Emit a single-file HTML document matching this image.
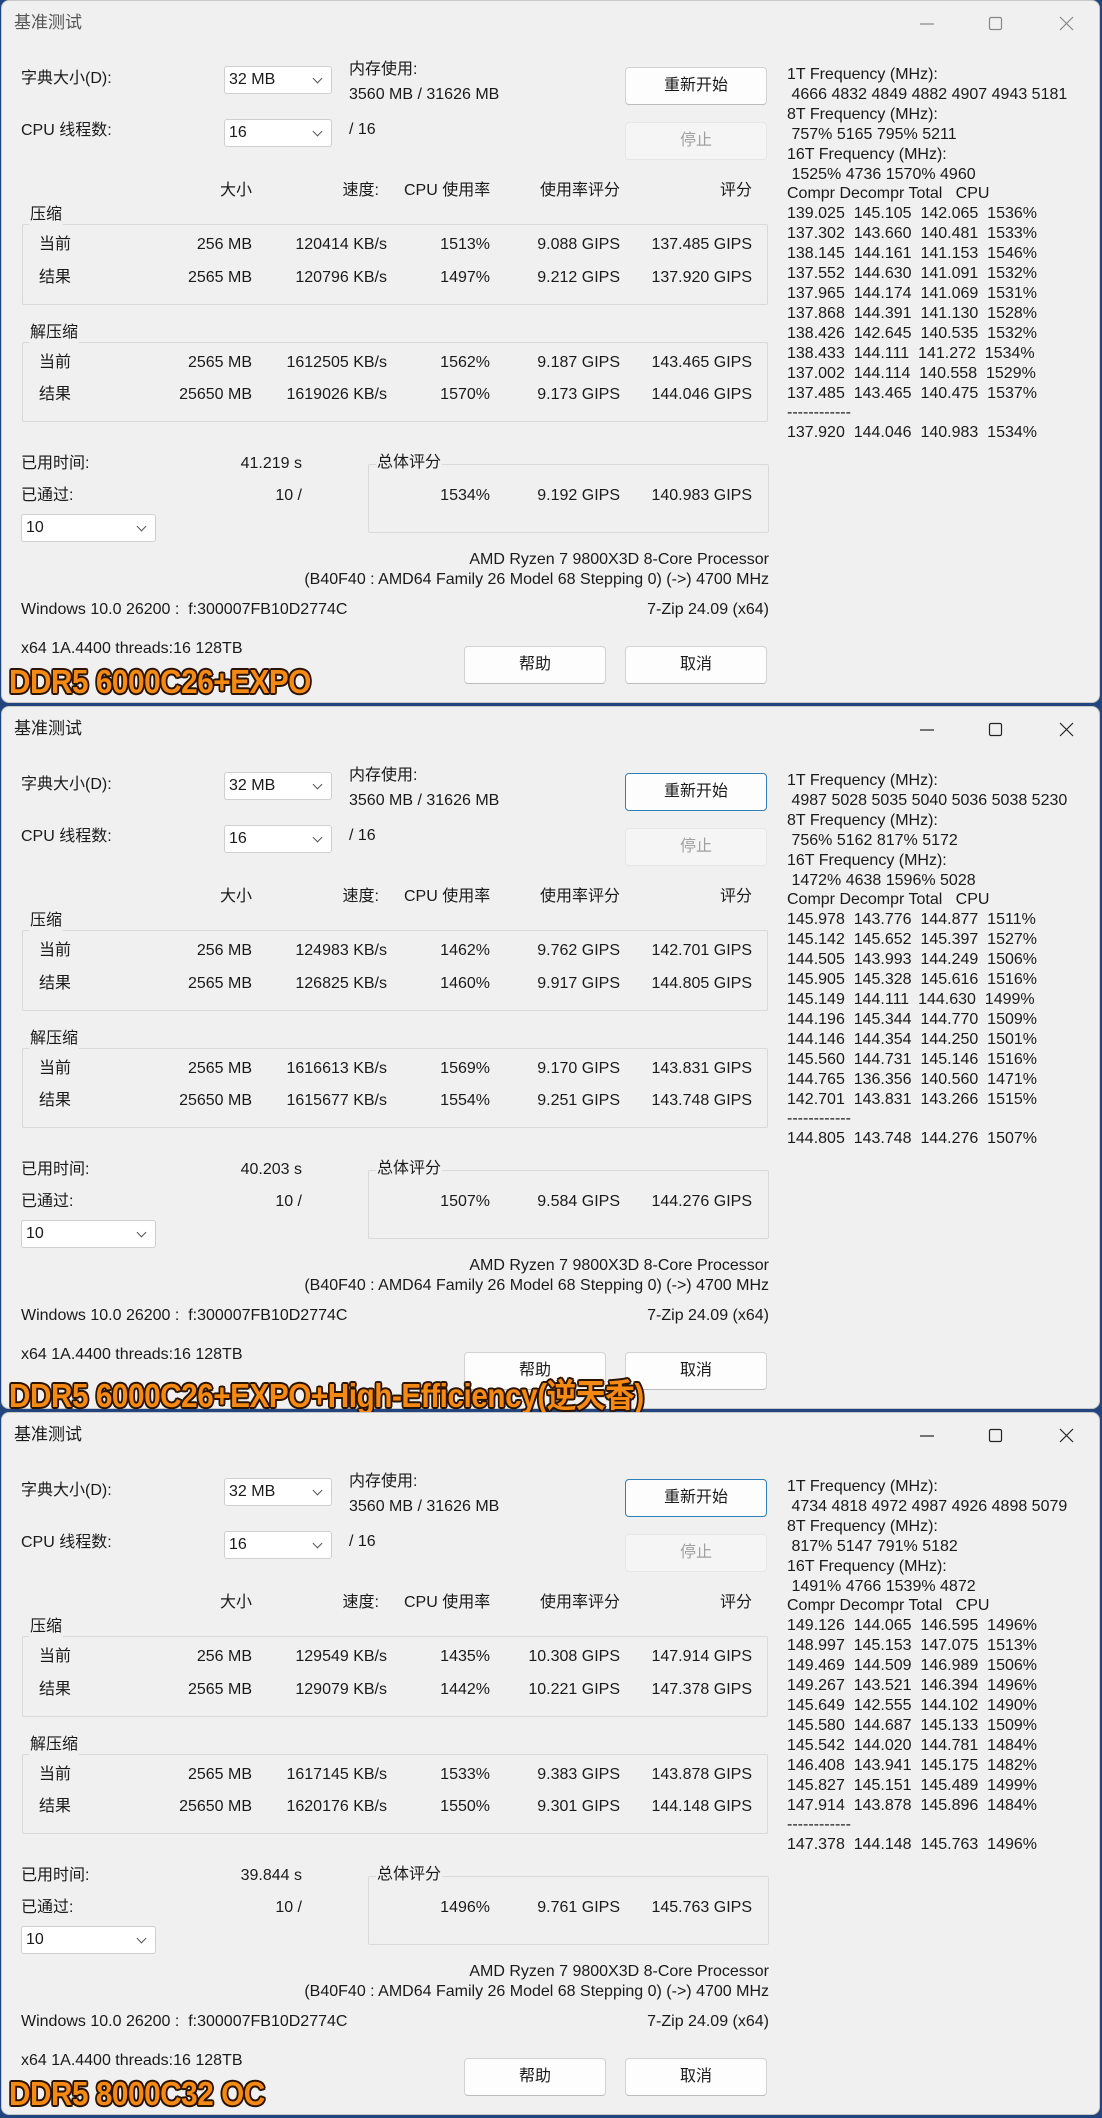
<!DOCTYPE html>
<html><head><meta charset="utf-8"><style>
*{margin:0;padding:0;box-sizing:border-box}
body{width:1102px;height:2118px;background:#23457e;position:relative;overflow:hidden;font-family:"Liberation Sans","Noto Sans CJK SC",sans-serif;font-size:16px;color:#1a1a1a}
.w{position:absolute;left:1px;width:1099px;height:703px;background:#f0f0f0;border:1px solid #c8c8c8;border-radius:8px}
.w div,.w span{position:absolute;white-space:nowrap}
.t{line-height:20px}
.r{text-align:right}
.title{left:12px;top:12px;color:#555;font-size:17px}
.cb{background:#fff;border:1px solid #cfcfcf;border-radius:3px;height:28px;padding:4px 0 0 4px}
.cb:after{content:"";position:absolute;right:10px;top:8px;width:6px;height:6px;border-right:1.3px solid #555;border-bottom:1.3px solid #555;transform:rotate(45deg)}
.btn{background:#fdfdfd;border:1px solid #d2d2d2;border-bottom-color:#bbb;border-radius:4px;text-align:center;line-height:36px}
.btn.f{border:1px solid #2f7fb8;}
.btn.d{background:#f5f5f5;border-color:#e6e6e6;color:#a0a0a0}
.gb{border:1px solid #d9d9d9;border-radius:2px}
.gl{background:#f0f0f0;padding:0 1px}
.rp{left:785px;top:64px;line-height:19.9px;font-size:16px}
.lab{left:7px;top:662px;font-weight:bold;font-size:33px;color:#f48a14;letter-spacing:-0.5px;transform:scaleX(.9);transform-origin:left top;
text-shadow:2px 0 #2a1300,-2px 0 #2a1300,0 2px #2a1300,0 -2px #2a1300,1.5px 1.5px #2a1300,-1.5px 1.5px #2a1300,1.5px -1.5px #2a1300,-1.5px -1.5px #2a1300}
.ic{position:absolute}
</style></head><body>

<!-- WINDOW 1 -->
<div class="w" style="top:0">
<div class="title t">基准测试</div>
<svg class="ic" style="left:910px;top:12px" width="170" height="22"><line x1="8" y1="11" x2="22" y2="11" stroke="#888" stroke-width="1.2"/><rect x="77.5" y="4.5" width="12" height="12" rx="1.5" fill="none" stroke="#888" stroke-width="1.2"/><path d="M148 4L161 17M161 4L148 17" stroke="#888" stroke-width="1.2"/></svg>
<div class="t" style="left:19px;top:68px">字典大小(D):</div>
<div class="cb" style="left:222px;top:65px;width:108px">32 MB</div>
<div class="t" style="left:347px;top:59px">内存使用:</div>
<div class="t" style="left:347px;top:84px">3560 MB / 31626 MB</div>
<div class="btn" style="left:623px;top:66px;width:142px;height:38px">重新开始</div>
<div class="t" style="left:19px;top:120px">CPU 线程数:</div>
<div class="cb" style="left:222px;top:118px;width:108px">16</div>
<div class="t" style="left:347px;top:119px">/ 16</div>
<div class="btn d" style="left:623px;top:121px;width:142px;height:38px">停止</div>
<div class="t r" style="left:150px;width:100px;top:180px">大小</div>
<div class="t r" style="left:275px;width:102px;top:180px">速度:</div>
<div class="t" style="left:402px;top:180px">CPU 使用率</div>
<div class="t r" style="left:500px;width:118px;top:180px">使用率评分</div>
<div class="t r" style="left:650px;width:100px;top:180px">评分</div>
<div class="gb" style="left:20px;top:223px;width:746px;height:81px"></div>
<div class="t gl" style="left:27px;top:204px">压缩</div>
<div class="t" style="left:37px;top:234px">当前</div><div class="t r" style="left:150px;width:100px;top:234px">256 MB</div><div class="t r" style="left:250px;width:135px;top:234px">120414 KB/s</div><div class="t r" style="left:400px;width:88px;top:234px">1513%</div><div class="t r" style="left:500px;width:118px;top:234px">9.088 GIPS</div><div class="t r" style="left:620px;width:130px;top:234px">137.485 GIPS</div>
<div class="t" style="left:37px;top:267px">结果</div><div class="t r" style="left:150px;width:100px;top:267px">2565 MB</div><div class="t r" style="left:250px;width:135px;top:267px">120796 KB/s</div><div class="t r" style="left:400px;width:88px;top:267px">1497%</div><div class="t r" style="left:500px;width:118px;top:267px">9.212 GIPS</div><div class="t r" style="left:620px;width:130px;top:267px">137.920 GIPS</div>
<div class="gb" style="left:20px;top:341px;width:746px;height:80px"></div>
<div class="t gl" style="left:27px;top:322px">解压缩</div>
<div class="t" style="left:37px;top:352px">当前</div><div class="t r" style="left:150px;width:100px;top:352px">2565 MB</div><div class="t r" style="left:250px;width:135px;top:352px">1612505 KB/s</div><div class="t r" style="left:400px;width:88px;top:352px">1562%</div><div class="t r" style="left:500px;width:118px;top:352px">9.187 GIPS</div><div class="t r" style="left:620px;width:130px;top:352px">143.465 GIPS</div>
<div class="t" style="left:37px;top:384px">结果</div><div class="t r" style="left:150px;width:100px;top:384px">25650 MB</div><div class="t r" style="left:250px;width:135px;top:384px">1619026 KB/s</div><div class="t r" style="left:400px;width:88px;top:384px">1570%</div><div class="t r" style="left:500px;width:118px;top:384px">9.173 GIPS</div><div class="t r" style="left:620px;width:130px;top:384px">144.046 GIPS</div>
<div class="t" style="left:19px;top:453px">已用时间:</div><div class="t r" style="left:180px;width:120px;top:453px">41.219 s</div>
<div class="t" style="left:19px;top:485px">已通过:</div><div class="t r" style="left:180px;width:120px;top:485px">10 /</div>
<div class="gb" style="left:366px;top:463px;width:401px;height:69px"></div>
<div class="t gl" style="left:374px;top:452px">总体评分</div>
<div class="t r" style="left:400px;width:88px;top:485px">1534%</div><div class="t r" style="left:500px;width:118px;top:485px">9.192 GIPS</div><div class="t r" style="left:620px;width:130px;top:485px">140.983 GIPS</div>
<div class="cb" style="left:19px;top:513px;width:135px">10</div>
<div class="t r" style="left:300px;width:467px;top:549px">AMD Ryzen 7 9800X3D 8-Core Processor</div>
<div class="t r" style="left:200px;width:567px;top:569px">(B40F40 : AMD64 Family 26 Model 68 Stepping 0) (-&gt;) 4700 MHz</div>
<div class="t" style="left:19px;top:599px">Windows 10.0 26200 : &nbsp;f:300007FB10D2774C</div>
<div class="t r" style="left:500px;width:267px;top:599px">7-Zip 24.09 (x64)</div>
<div class="t" style="left:19px;top:638px">x64 1A.4400 threads:16 128TB</div>
<div class="btn" style="left:462px;top:645px;width:142px;height:38px">帮助</div>
<div class="btn" style="left:623px;top:645px;width:142px;height:38px">取消</div>
<div class="rp">1T Frequency (MHz):<br>&nbsp;4666 4832 4849 4882 4907 4943 5181<br>8T Frequency (MHz):<br>&nbsp;757% 5165 795% 5211<br>16T Frequency (MHz):<br>&nbsp;1525% 4736 1570% 4960<br>Compr Decompr Total &nbsp; CPU<br>139.025 &nbsp;145.105 &nbsp;142.065 &nbsp;1536%<br>137.302 &nbsp;143.660 &nbsp;140.481 &nbsp;1533%<br>138.145 &nbsp;144.161 &nbsp;141.153 &nbsp;1546%<br>137.552 &nbsp;144.630 &nbsp;141.091 &nbsp;1532%<br>137.965 &nbsp;144.174 &nbsp;141.069 &nbsp;1531%<br>137.868 &nbsp;144.391 &nbsp;141.130 &nbsp;1528%<br>138.426 &nbsp;142.645 &nbsp;140.535 &nbsp;1532%<br>138.433 &nbsp;144.111 &nbsp;141.272 &nbsp;1534%<br>137.002 &nbsp;144.114 &nbsp;140.558 &nbsp;1529%<br>137.485 &nbsp;143.465 &nbsp;140.475 &nbsp;1537%<br>------------<br>137.920 &nbsp;144.046 &nbsp;140.983 &nbsp;1534%</div>
<div class="lab">DDR5 6000C26+EXPO</div>
</div>

<!-- WINDOW 2 -->
<div class="w" style="top:706px">
<div class="title t" style="color:#1a1a1a">基准测试</div>
<svg class="ic" style="left:910px;top:12px" width="170" height="22"><line x1="8" y1="11" x2="22" y2="11" stroke="#222" stroke-width="1.2"/><rect x="77.5" y="4.5" width="12" height="12" rx="1.5" fill="none" stroke="#222" stroke-width="1.2"/><path d="M148 4L161 17M161 4L148 17" stroke="#222" stroke-width="1.2"/></svg>
<div class="t" style="left:19px;top:68px">字典大小(D):</div>
<div class="cb" style="left:222px;top:65px;width:108px">32 MB</div>
<div class="t" style="left:347px;top:59px">内存使用:</div>
<div class="t" style="left:347px;top:84px">3560 MB / 31626 MB</div>
<div class="btn f" style="left:623px;top:66px;width:142px;height:38px">重新开始</div>
<div class="t" style="left:19px;top:120px">CPU 线程数:</div>
<div class="cb" style="left:222px;top:118px;width:108px">16</div>
<div class="t" style="left:347px;top:119px">/ 16</div>
<div class="btn d" style="left:623px;top:121px;width:142px;height:38px">停止</div>
<div class="t r" style="left:150px;width:100px;top:180px">大小</div>
<div class="t r" style="left:275px;width:102px;top:180px">速度:</div>
<div class="t" style="left:402px;top:180px">CPU 使用率</div>
<div class="t r" style="left:500px;width:118px;top:180px">使用率评分</div>
<div class="t r" style="left:650px;width:100px;top:180px">评分</div>
<div class="gb" style="left:20px;top:223px;width:746px;height:81px"></div>
<div class="t gl" style="left:27px;top:204px">压缩</div>
<div class="t" style="left:37px;top:234px">当前</div><div class="t r" style="left:150px;width:100px;top:234px">256 MB</div><div class="t r" style="left:250px;width:135px;top:234px">124983 KB/s</div><div class="t r" style="left:400px;width:88px;top:234px">1462%</div><div class="t r" style="left:500px;width:118px;top:234px">9.762 GIPS</div><div class="t r" style="left:620px;width:130px;top:234px">142.701 GIPS</div>
<div class="t" style="left:37px;top:267px">结果</div><div class="t r" style="left:150px;width:100px;top:267px">2565 MB</div><div class="t r" style="left:250px;width:135px;top:267px">126825 KB/s</div><div class="t r" style="left:400px;width:88px;top:267px">1460%</div><div class="t r" style="left:500px;width:118px;top:267px">9.917 GIPS</div><div class="t r" style="left:620px;width:130px;top:267px">144.805 GIPS</div>
<div class="gb" style="left:20px;top:341px;width:746px;height:80px"></div>
<div class="t gl" style="left:27px;top:322px">解压缩</div>
<div class="t" style="left:37px;top:352px">当前</div><div class="t r" style="left:150px;width:100px;top:352px">2565 MB</div><div class="t r" style="left:250px;width:135px;top:352px">1616613 KB/s</div><div class="t r" style="left:400px;width:88px;top:352px">1569%</div><div class="t r" style="left:500px;width:118px;top:352px">9.170 GIPS</div><div class="t r" style="left:620px;width:130px;top:352px">143.831 GIPS</div>
<div class="t" style="left:37px;top:384px">结果</div><div class="t r" style="left:150px;width:100px;top:384px">25650 MB</div><div class="t r" style="left:250px;width:135px;top:384px">1615677 KB/s</div><div class="t r" style="left:400px;width:88px;top:384px">1554%</div><div class="t r" style="left:500px;width:118px;top:384px">9.251 GIPS</div><div class="t r" style="left:620px;width:130px;top:384px">143.748 GIPS</div>
<div class="t" style="left:19px;top:453px">已用时间:</div><div class="t r" style="left:180px;width:120px;top:453px">40.203 s</div>
<div class="t" style="left:19px;top:485px">已通过:</div><div class="t r" style="left:180px;width:120px;top:485px">10 /</div>
<div class="gb" style="left:366px;top:463px;width:401px;height:69px"></div>
<div class="t gl" style="left:374px;top:452px">总体评分</div>
<div class="t r" style="left:400px;width:88px;top:485px">1507%</div><div class="t r" style="left:500px;width:118px;top:485px">9.584 GIPS</div><div class="t r" style="left:620px;width:130px;top:485px">144.276 GIPS</div>
<div class="cb" style="left:19px;top:513px;width:135px">10</div>
<div class="t r" style="left:300px;width:467px;top:549px">AMD Ryzen 7 9800X3D 8-Core Processor</div>
<div class="t r" style="left:200px;width:567px;top:569px">(B40F40 : AMD64 Family 26 Model 68 Stepping 0) (-&gt;) 4700 MHz</div>
<div class="t" style="left:19px;top:599px">Windows 10.0 26200 : &nbsp;f:300007FB10D2774C</div>
<div class="t r" style="left:500px;width:267px;top:599px">7-Zip 24.09 (x64)</div>
<div class="t" style="left:19px;top:638px">x64 1A.4400 threads:16 128TB</div>
<div class="btn" style="left:462px;top:645px;width:142px;height:38px">帮助</div>
<div class="btn" style="left:623px;top:645px;width:142px;height:38px">取消</div>
<div class="rp">1T Frequency (MHz):<br>&nbsp;4987 5028 5035 5040 5036 5038 5230<br>8T Frequency (MHz):<br>&nbsp;756% 5162 817% 5172<br>16T Frequency (MHz):<br>&nbsp;1472% 4638 1596% 5028<br>Compr Decompr Total &nbsp; CPU<br>145.978 &nbsp;143.776 &nbsp;144.877 &nbsp;1511%<br>145.142 &nbsp;145.652 &nbsp;145.397 &nbsp;1527%<br>144.505 &nbsp;143.993 &nbsp;144.249 &nbsp;1506%<br>145.905 &nbsp;145.328 &nbsp;145.616 &nbsp;1516%<br>145.149 &nbsp;144.111 &nbsp;144.630 &nbsp;1499%<br>144.196 &nbsp;145.344 &nbsp;144.770 &nbsp;1509%<br>144.146 &nbsp;144.354 &nbsp;144.250 &nbsp;1501%<br>145.560 &nbsp;144.731 &nbsp;145.146 &nbsp;1516%<br>144.765 &nbsp;136.356 &nbsp;140.560 &nbsp;1471%<br>142.701 &nbsp;143.831 &nbsp;143.266 &nbsp;1515%<br>------------<br>144.805 &nbsp;143.748 &nbsp;144.276 &nbsp;1507%</div>
<div class="lab">DDR5 6000C26+EXPO+High-Efficiency(逆天香)</div>
</div>

<!-- WINDOW 3 -->
<div class="w" style="top:1412px">
<div class="title t" style="color:#1a1a1a">基准测试</div>
<svg class="ic" style="left:910px;top:12px" width="170" height="22"><line x1="8" y1="11" x2="22" y2="11" stroke="#222" stroke-width="1.2"/><rect x="77.5" y="4.5" width="12" height="12" rx="1.5" fill="none" stroke="#222" stroke-width="1.2"/><path d="M148 4L161 17M161 4L148 17" stroke="#222" stroke-width="1.2"/></svg>
<div class="t" style="left:19px;top:68px">字典大小(D):</div>
<div class="cb" style="left:222px;top:65px;width:108px">32 MB</div>
<div class="t" style="left:347px;top:59px">内存使用:</div>
<div class="t" style="left:347px;top:84px">3560 MB / 31626 MB</div>
<div class="btn f" style="left:623px;top:66px;width:142px;height:38px">重新开始</div>
<div class="t" style="left:19px;top:120px">CPU 线程数:</div>
<div class="cb" style="left:222px;top:118px;width:108px">16</div>
<div class="t" style="left:347px;top:119px">/ 16</div>
<div class="btn d" style="left:623px;top:121px;width:142px;height:38px">停止</div>
<div class="t r" style="left:150px;width:100px;top:180px">大小</div>
<div class="t r" style="left:275px;width:102px;top:180px">速度:</div>
<div class="t" style="left:402px;top:180px">CPU 使用率</div>
<div class="t r" style="left:500px;width:118px;top:180px">使用率评分</div>
<div class="t r" style="left:650px;width:100px;top:180px">评分</div>
<div class="gb" style="left:20px;top:223px;width:746px;height:81px"></div>
<div class="t gl" style="left:27px;top:204px">压缩</div>
<div class="t" style="left:37px;top:234px">当前</div><div class="t r" style="left:150px;width:100px;top:234px">256 MB</div><div class="t r" style="left:250px;width:135px;top:234px">129549 KB/s</div><div class="t r" style="left:400px;width:88px;top:234px">1435%</div><div class="t r" style="left:500px;width:118px;top:234px">10.308 GIPS</div><div class="t r" style="left:620px;width:130px;top:234px">147.914 GIPS</div>
<div class="t" style="left:37px;top:267px">结果</div><div class="t r" style="left:150px;width:100px;top:267px">2565 MB</div><div class="t r" style="left:250px;width:135px;top:267px">129079 KB/s</div><div class="t r" style="left:400px;width:88px;top:267px">1442%</div><div class="t r" style="left:500px;width:118px;top:267px">10.221 GIPS</div><div class="t r" style="left:620px;width:130px;top:267px">147.378 GIPS</div>
<div class="gb" style="left:20px;top:341px;width:746px;height:80px"></div>
<div class="t gl" style="left:27px;top:322px">解压缩</div>
<div class="t" style="left:37px;top:352px">当前</div><div class="t r" style="left:150px;width:100px;top:352px">2565 MB</div><div class="t r" style="left:250px;width:135px;top:352px">1617145 KB/s</div><div class="t r" style="left:400px;width:88px;top:352px">1533%</div><div class="t r" style="left:500px;width:118px;top:352px">9.383 GIPS</div><div class="t r" style="left:620px;width:130px;top:352px">143.878 GIPS</div>
<div class="t" style="left:37px;top:384px">结果</div><div class="t r" style="left:150px;width:100px;top:384px">25650 MB</div><div class="t r" style="left:250px;width:135px;top:384px">1620176 KB/s</div><div class="t r" style="left:400px;width:88px;top:384px">1550%</div><div class="t r" style="left:500px;width:118px;top:384px">9.301 GIPS</div><div class="t r" style="left:620px;width:130px;top:384px">144.148 GIPS</div>
<div class="t" style="left:19px;top:453px">已用时间:</div><div class="t r" style="left:180px;width:120px;top:453px">39.844 s</div>
<div class="t" style="left:19px;top:485px">已通过:</div><div class="t r" style="left:180px;width:120px;top:485px">10 /</div>
<div class="gb" style="left:366px;top:463px;width:401px;height:69px"></div>
<div class="t gl" style="left:374px;top:452px">总体评分</div>
<div class="t r" style="left:400px;width:88px;top:485px">1496%</div><div class="t r" style="left:500px;width:118px;top:485px">9.761 GIPS</div><div class="t r" style="left:620px;width:130px;top:485px">145.763 GIPS</div>
<div class="cb" style="left:19px;top:513px;width:135px">10</div>
<div class="t r" style="left:300px;width:467px;top:549px">AMD Ryzen 7 9800X3D 8-Core Processor</div>
<div class="t r" style="left:200px;width:567px;top:569px">(B40F40 : AMD64 Family 26 Model 68 Stepping 0) (-&gt;) 4700 MHz</div>
<div class="t" style="left:19px;top:599px">Windows 10.0 26200 : &nbsp;f:300007FB10D2774C</div>
<div class="t r" style="left:500px;width:267px;top:599px">7-Zip 24.09 (x64)</div>
<div class="t" style="left:19px;top:638px">x64 1A.4400 threads:16 128TB</div>
<div class="btn" style="left:462px;top:645px;width:142px;height:38px">帮助</div>
<div class="btn" style="left:623px;top:645px;width:142px;height:38px">取消</div>
<div class="rp">1T Frequency (MHz):<br>&nbsp;4734 4818 4972 4987 4926 4898 5079<br>8T Frequency (MHz):<br>&nbsp;817% 5147 791% 5182<br>16T Frequency (MHz):<br>&nbsp;1491% 4766 1539% 4872<br>Compr Decompr Total &nbsp; CPU<br>149.126 &nbsp;144.065 &nbsp;146.595 &nbsp;1496%<br>148.997 &nbsp;145.153 &nbsp;147.075 &nbsp;1513%<br>149.469 &nbsp;144.509 &nbsp;146.989 &nbsp;1506%<br>149.267 &nbsp;143.521 &nbsp;146.394 &nbsp;1496%<br>145.649 &nbsp;142.555 &nbsp;144.102 &nbsp;1490%<br>145.580 &nbsp;144.687 &nbsp;145.133 &nbsp;1509%<br>145.542 &nbsp;144.020 &nbsp;144.781 &nbsp;1484%<br>146.408 &nbsp;143.941 &nbsp;145.175 &nbsp;1482%<br>145.827 &nbsp;145.151 &nbsp;145.489 &nbsp;1499%<br>147.914 &nbsp;143.878 &nbsp;145.896 &nbsp;1484%<br>------------<br>147.378 &nbsp;144.148 &nbsp;145.763 &nbsp;1496%</div>
<div class="lab">DDR5 8000C32 OC</div>
</div>
</body></html>
